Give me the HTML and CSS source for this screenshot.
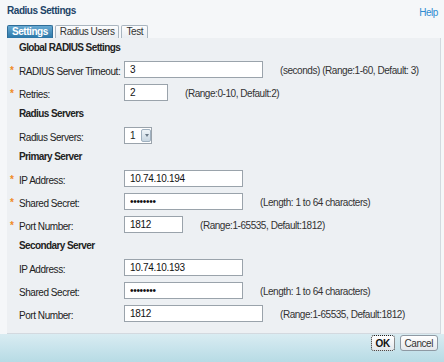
FILE: index.html
```html
<!DOCTYPE html>
<html>
<head>
    <meta charset="UTF-8">
    <title>Radius Settings</title>
    <link rel="stylesheet" href="styles.css">
</head>
<body>

<div class="header">
    <h2>Radius Settings</h2>
    <a class="help" href="#">Help</a>
</div>

<ul class="tabs">
    <li class="tab active">Settings</li>
    <li class="tab">Radius Users</li>
    <li class="tab">Test</li>
</ul>

<div class="panel">
    <div class="title">Global RADIUS Settings</div>
    <div class="row req">
        <label>RADIUS Server Timeout:</label>
        <input type="text" class="w-long" value="3">
        <span class="hint">(seconds) (Range:1-60, Default: 3)</span>
    </div>
    <div class="row req">
        <label>Retries:</label>
        <input type="text" class="w-tiny" value="2">
        <span class="hint">(Range:0-10, Default:2)</span>
    </div>

    <div class="title">Radius Servers</div>
    <div class="row">
        <label>Radius Servers:</label>
        <div class="select">
            <span class="select-val">1</span>
            <span class="select-btn"></span>
        </div>
    </div>

    <div class="title">Primary Server</div>
    <div class="row req">
        <label>IP Address:</label>
        <input type="text" class="w-mid" value="10.74.10.194">
    </div>
    <div class="row req">
        <label>Shared Secret:</label>
        <input type="password" class="w-mid" value="secretxx">
        <span class="hint">(Length: 1 to 64 characters)</span>
    </div>
    <div class="row req">
        <label>Port Number:</label>
        <input type="text" class="w-short" value="1812">
        <span class="hint">(Range:1-65535, Default:1812)</span>
    </div>

    <div class="title">Secondary Server</div>
    <div class="row">
        <label>IP Address:</label>
        <input type="text" class="w-mid" value="10.74.10.193">
    </div>
    <div class="row">
        <label>Shared Secret:</label>
        <input type="password" class="w-mid" value="secretxx">
        <span class="hint">(Length: 1 to 64 characters)</span>
    </div>
    <div class="row">
        <label>Port Number:</label>
        <input type="text" class="w-long" value="1812">
        <span class="hint">(Range:1-65535, Default:1812)</span>
    </div>
</div>

<div class="footer">
    <button class="btn ok">OK</button>
    <button class="btn">Cancel</button>
</div>

</body>
</html>
```

FILE: styles.css
```css
body {
    margin: 0;
    width: 444px;
    height: 362px;
    overflow: hidden;
    font-family: "Liberation Sans", Arial, sans-serif;
    font-size: 10px;
    letter-spacing: -0.45px;
    color: #222;
    background: #f5f7f9;
}

.header {
    display: flex;
    justify-content: space-between;
    align-items: center;
    height: 25px;
    padding: 0 6px 0 7px;
}
.header h2 {
    margin: 0;
    font-size: 10px;
    font-weight: bold;
    color: #1d4468;
    position: relative;
    top: -2px;
}
.help {
    color: #2f8bd1;
    text-decoration: none;
}

.tabs {
    display: flex;
    gap: 2px;
    list-style: none;
    margin: 0;
    padding: 0 0 0 7px;
    height: 13px;
}
.tab {
    height: 12px;
    line-height: 12px;
    padding: 0 4px;
    border: 1px solid #a9b5c0;
    border-bottom: none;
    border-radius: 2px 2px 0 0;
    background: linear-gradient(#fbfcfd, #e9edf1);
    color: #333;
}
.tab.active {
    color: #fff;
    font-weight: bold;
    border-color: #2f6d98;
    background: linear-gradient(#68aad3, #2a76a7);
}

.panel {
    margin: 0 3px 0 7px;
    height: 286px;
    padding: 0 0 9px 0;
    background: #edf0f3;
    border-right: 1px solid #d3d9df;
    border-bottom: 1px solid #d3d9df;
}

.title {
    height: 20px;
    line-height: 20px;
    padding-left: 12px;
    font-weight: bold;
    letter-spacing: -0.6px;
    color: #222;
}

.row {
    display: flex;
    align-items: center;
    height: 23px;
    padding-left: 12px;
    position: relative;
}
.row label {
    width: 105px;
    flex: none;
    padding-top: 3px;
    color: #222;
}
.row.req::before {
    content: "*";
    color: #f08a24;
    font-weight: bold;
    position: absolute;
    left: 3px;
    top: 7px;
}

input {
    box-sizing: border-box;
    height: 17px;
    margin: 0;
    padding: 0 5px;
    font-family: "Liberation Sans", Arial, sans-serif;
    font-size: 10px;
    letter-spacing: -0.3px;
    color: #111;
    background: #fff;
    border: 1px solid #9aa3ab;
    border-radius: 0;
    flex: none;
}
.w-long { width: 139px; }
.w-mid { width: 119px; }
.w-short { width: 59px; }
.w-tiny { width: 44px; }

.hint {
    margin-left: 17px;
    padding-top: 1px;
    color: #333;
    white-space: nowrap;
}

.select {
    display: flex;
    align-items: center;
    box-sizing: border-box;
    width: 28px;
    height: 17px;
    background: #fff;
    border: 1px solid #9aa3ab;
}
.select-val {
    width: 13px;
    padding-left: 5px;
}
.select-btn {
    box-sizing: border-box;
    width: 12px;
    height: 13px;
    border: 1px solid #9fb0bf;
    border-radius: 2px;
    background: linear-gradient(#eef4f8, #c8d6e1);
    position: relative;
}
.select-btn::after {
    content: "";
    position: absolute;
    left: 3px;
    top: 4px;
    border-left: 2px solid transparent;
    border-right: 2px solid transparent;
    border-top: 3px solid #6a7a88;
}

.footer {
    display: flex;
    justify-content: flex-end;
    align-items: flex-start;
    gap: 5px;
    height: 28px;
    padding: 1px 6px 0 0;
    box-sizing: border-box;
    background: linear-gradient(#d9ecf2, #b7dbe5);
}
.btn {
    box-sizing: border-box;
    height: 16px;
    padding: 0 4px;
    font-family: "Liberation Sans", Arial, sans-serif;
    font-size: 10px;
    letter-spacing: -0.45px;
    color: #333;
    background: linear-gradient(#ffffff, #e4e8ec);
    border: 1px solid #8e99a3;
    border-radius: 3px;
}
.btn.ok {
    width: 24px;
    font-weight: bold;
    color: #111;
    border: 1px dotted #222;
}
```
